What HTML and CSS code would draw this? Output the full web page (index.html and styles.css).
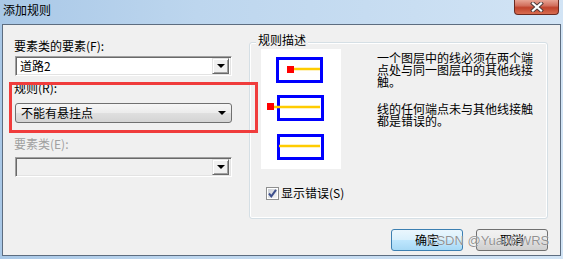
FILE: index.html
```html
<!DOCTYPE html>
<html lang="zh-CN">
<head>
  <meta charset="UTF-8">
  <title>添加规则</title>
  <link rel="stylesheet" href="styles.css">
</head>
<body>
  <div class="window">
    <div class="titlebar">
      <span class="title">添加规则</span>
      <button class="close-btn">
        <svg width="14" height="10" viewBox="0 0 14 10">
          <path d="M3 1.5 L11 8.5 M11 1.5 L3 8.5" stroke="#4a3a3a" stroke-width="4" stroke-linecap="square"/>
          <path d="M3 1.5 L11 8.5 M11 1.5 L3 8.5" stroke="#ffffff" stroke-width="2.2" stroke-linecap="square"/>
        </svg>
      </button>
    </div>

    <div class="client">
      <div class="left-col">
        <div class="label label-feature">要素类的要素(F):</div>
        <div class="combo classic">
          <span class="combo-text">道路2</span>
          <span class="drop-btn"><span class="arrow"></span></span>
        </div>

        <div class="label label-rule">规则(R):</div>
        <div class="combo modern">
          <span class="combo-text">不能有悬挂点</span>
          <span class="arrow"></span>
        </div>

        <div class="label label-class disabled">要素类(E):</div>
        <div class="combo classic is-disabled">
          <span class="combo-text"></span>
          <span class="drop-btn"><span class="arrow"></span></span>
        </div>
      </div>

      <div class="group">
        <span class="group-title">规则描述</span>
        <div class="desc-row">
          <svg class="rule-pic" width="80" height="120" viewBox="0 0 80 120">
            <rect width="80" height="120" fill="#ffffff"/>
            <rect x="16.5" y="9.5" width="44" height="23" fill="none" stroke="#0000ff" stroke-width="3"/>
            <line x1="32" y1="20" x2="59" y2="20" stroke="#ffcc00" stroke-width="2.5"/>
            <rect x="26" y="17" width="7" height="7" fill="#ff0000"/>

            <rect x="17.5" y="47.5" width="44" height="23" fill="none" stroke="#0000ff" stroke-width="3"/>
            <line x1="12" y1="58" x2="59" y2="58" stroke="#ffcc00" stroke-width="2.5"/>
            <rect x="6" y="54" width="7" height="7" fill="#ff0000"/>

            <rect x="17.5" y="86.5" width="44" height="23" fill="none" stroke="#0000ff" stroke-width="3"/>
            <line x1="18" y1="97" x2="59" y2="97" stroke="#ffcc00" stroke-width="2.5"/>
          </svg>
          <div class="desc-text">
            <p>一个图层中的线必须在两个端点处与同一图层中的其他线接触。</p>
            <p>线的任何端点未与其他线接触都是错误的。</p>
          </div>
        </div>
        <label class="check-row">
          <svg class="checkbox" width="13" height="13" viewBox="0 0 13 13">
            <defs>
              <linearGradient id="cbg" x1="0" y1="0" x2="1" y2="1">
                <stop offset="0" stop-color="#cbcfd5"/>
                <stop offset="1" stop-color="#f6f6f6"/>
              </linearGradient>
            </defs>
            <rect x="0.5" y="0.5" width="12" height="12" fill="#ffffff" stroke="#8e8f8f"/>
            <rect x="2" y="2" width="9" height="9" fill="url(#cbg)"/>
            <path d="M3 6.5 L5.3 9.3 L10 2.8" fill="none" stroke="#3d4f8c" stroke-width="2"/>
          </svg>
          <span>显示错误(S)</span>
        </label>
      </div>

      <div class="buttons">
        <button class="btn btn-default">确定</button>
        <button class="btn">取消</button>
      </div>
    </div>

    <div class="annotation"></div>
    <div class="watermark">CSDN @YuanEWRS</div>
  </div>
</body>
</html>
```

FILE: styles.css
```css
body {
  margin: 0;
  font-family: "Noto Sans CJK SC", "Noto Sans", sans-serif;
  font-size: 12px;
  color: #000;
}
.window {
  position: relative;
  width: 563px;
  height: 259px;
  display: flex;
  flex-direction: column;
  background: linear-gradient(90deg, #a9c8e7 0%, #bdd6ee 35%, #c6dcf1 65%, #d2e4f5 100%);
  overflow: hidden;
}
.titlebar {
  height: 24px;
  display: flex;
  justify-content: space-between;
  align-items: flex-start;
}
.title {
  padding: 2px 0 0 3px;
  line-height: 15px;
  font-size: 12px;
}
.close-btn {
  width: 45px;
  height: 15px;
  margin-right: 4px;
  padding: 0;
  border: 1px solid #6b2a20;
  border-top: none;
  border-radius: 0 0 4px 4px;
  background: linear-gradient(#e8a494 0%, #d2705e 40%, #c0432c 55%, #d86c50 100%);
  display: flex;
  align-items: center;
  justify-content: center;
}
.client {
  flex: 1;
  margin: 0 2px 3px 2px;
  border: 1px solid #5d6d80;
  background: #f0f0f0;
  display: grid;
  grid-template-columns: 218px 299px;
  column-gap: 17px;
  align-content: start;
  padding: 14px 11px 0 11px;
}
.left-col {
  display: flex;
  flex-direction: column;
}
.label {
  line-height: 14px;
}
.label.disabled {
  color: #a0a0a0;
}
.label-rule {
  margin-top: 5px;
}
.label-class {
  margin-top: 14px;
}
.combo {
  box-sizing: border-box;
  width: 217px;
  height: 20px;
  margin-left: 1px;
  display: flex;
  align-items: center;
  justify-content: space-between;
}
.combo.classic {
  margin-top: 3px;
  background: #fff;
  border: 1px solid;
  border-color: #a0a0a0 #ffffff #ffffff #a0a0a0;
  box-shadow: inset 1px 1px 0 #696969, inset -1px -1px 0 #e3e3e3;
  padding: 2px;
}
.combo.is-disabled {
  margin-top: 6px;
  background: #f0f0f0;
}
.combo-text {
  padding-left: 2px;
  line-height: 14px;
  font-size: 12px;
}
.drop-btn {
  box-sizing: border-box;
  width: 17px;
  height: 16px;
  background: #f0f0f0;
  border: 1px solid;
  border-color: #e3e3e3 #696969 #696969 #e3e3e3;
  box-shadow: inset 1px 1px 0 #ffffff, inset -1px -1px 0 #a0a0a0;
  display: flex;
  align-items: center;
  justify-content: center;
}
.arrow {
  width: 0;
  height: 0;
  border-left: 4px solid transparent;
  border-right: 4px solid transparent;
  border-top: 4px solid #000;
}
.combo.modern {
  margin-top: 8px;
  border: 1px solid #707070;
  border-radius: 3px;
  background: linear-gradient(#f6f6f6 0%, #ececec 48%, #dfdfdf 52%, #d4d4d4 100%);
  padding: 0 5px 0 3px;
}
.group {
  box-sizing: border-box;
  height: 177px;
  margin-top: 3px;
  border: 1px solid #d5dfe5;
  border-radius: 3px;
  box-shadow: inset 0 0 0 1px #ffffff;
  display: flex;
  flex-direction: column;
  align-items: flex-start;
}
.group-title {
  margin: -10px 0 0 6px;
  padding: 0 2px;
  line-height: 14px;
  background: #f0f0f0;
}
.desc-row {
  display: flex;
  margin: 2px 0 0 11px;
}
.rule-pic {
  display: block;
}
.desc-text {
  width: 157px;
  margin-left: 36px;
  padding-top: 3px;
  line-height: 12px;
}
.desc-text p {
  margin: 0 0 15px;
}
.check-row {
  display: flex;
  align-items: center;
  gap: 2px;
  margin: 17px 0 0 16px;
  line-height: 14px;
}
.checkbox {
  display: block;
}
.buttons {
  grid-column: 1 / 3;
  display: flex;
  justify-content: flex-end;
  gap: 13px;
  margin-top: 10px;
}
.btn {
  width: 72px;
  height: 22px;
  padding: 0;
  font-family: "Noto Sans CJK SC", sans-serif;
  font-size: 12px;
  line-height: 14px;
  color: #000;
  border: 1px solid #707070;
  border-radius: 3px;
  background: linear-gradient(#f2f2f2 0%, #ebebeb 48%, #dddddd 52%, #cfcfcf 100%);
}
.btn-default {
  border-color: #3c7fb1;
  background: linear-gradient(#eaf6fd 0%, #d9f0fc 48%, #bee6fd 52%, #a7d9f5 100%);
}
.annotation {
  position: absolute;
  left: 9px;
  top: 82px;
  width: 249px;
  height: 51px;
  box-sizing: border-box;
  border: 3px solid #f03c3c;
}
.watermark {
  position: absolute;
  left: 427px;
  top: 233px;
  font-family: "Liberation Sans", Arial, sans-serif;
  font-size: 13px;
  line-height: 16px;
  color: rgba(110, 110, 110, 0.75);
  text-shadow: 0 0 1px #ffffff;
}
```
